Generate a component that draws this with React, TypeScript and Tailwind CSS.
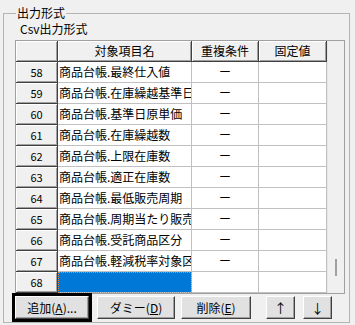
import React from 'react';

// 出力形式 panel: legacy WinForms look
const rows = [
  { no: 58, name: '商品台帳.最終仕入値', dup: true },
  { no: 59, name: '商品台帳.在庫繰越基準日', dup: true },
  { no: 60, name: '商品台帳.基準日原単価', dup: true },
  { no: 61, name: '商品台帳.在庫繰越数', dup: true },
  { no: 62, name: '商品台帳.上限在庫数', dup: true },
  { no: 63, name: '商品台帳.適正在庫数', dup: true },
  { no: 64, name: '商品台帳.最低販売周期', dup: true },
  { no: 65, name: '商品台帳.周期当たり販売数', dup: true },
  { no: 66, name: '商品台帳.受託商品区分', dup: true },
  { no: 67, name: '商品台帳.軽減税率対象区分', dup: true },
  { no: 68, name: '', dup: false, selected: true },
];

const raised =
  'bg-[#f0f0f0] border-r border-b border-[#404040] shadow-[inset_1px_1px_#ffffff,inset_-1px_-1px_#a0a0a0]';

const btnBase =
  'h-[23px] flex items-center justify-center bg-[#e1e1e1] border border-t-white border-l-white border-r-[#404040] border-b-[#404040] shadow-[inset_-1px_-1px_#a0a0a0] leading-none text-black';

const WinButton: React.FC<{ label: string; mnemonic: string; suffix?: string; className?: string }> = ({
  label,
  mnemonic,
  suffix = '',
  className = '',
}) => (
  <button className={`${btnBase} text-[12px] ${className}`}>
    {label}(<span className="underline">{mnemonic}</span>){suffix}
  </button>
);

export default function App() {
  return (
    <div
      className="w-[355px] h-[325px] bg-[#f0f0f0] text-black overflow-hidden pt-[6px] pl-[3px]"
      style={{ fontFamily: '"Noto Sans CJK JP", "Liberation Sans", sans-serif' }}
    >
      <fieldset className="w-[347px] h-[317px] border border-[#b4b4b4] pl-[11px] pr-[3px]">
        <legend className="ml-[1px] px-[1px] text-[12px] leading-[14px]">出力形式</legend>
        <div className="ml-[5px] mt-[2px] text-[12px] leading-[14px]">Csv出力形式</div>

        {/* grid */}
        <div className="mt-[4px] w-[330px] h-[254px] border border-[#a0a0a0] bg-[#f0f0f0] flex">
          <div className="w-[311px] flex flex-col">
            <div className="flex h-[21px] text-[12px]">
              <div className={`w-[42px] ${raised}`} />
              <div className={`w-[134px] ${raised} flex items-center justify-center`}>対象項目名</div>
              <div className={`w-[67px] ${raised} flex items-center justify-center`}>重複条件</div>
              <div className={`w-[68px] ${raised} flex items-center justify-center`}>固定値</div>
            </div>
            {rows.map((r) => (
              <div key={r.no} className="flex h-[21px] text-[12px]">
                <div className={`w-[42px] ${raised} flex items-center justify-center text-[11px]`}>{r.no}</div>
                <div
                  className={`w-[134px] border-b border-r border-[#c0c0c0] overflow-hidden whitespace-nowrap leading-[20px] pl-[1px] ${
                    r.selected ? 'bg-[#0078d7] outline-1 outline-dotted outline-[#f08a24] -outline-offset-1' : 'bg-white'
                  }`}
                >
                  {r.name}
                </div>
                <div className="w-[67px] bg-white border-b border-r border-[#c0c0c0] flex items-center justify-center">
                  {r.dup ? 'ー' : ''}
                </div>
                <div className="w-[68px] bg-white border-b border-r border-[#c0c0c0]" />
              </div>
            ))}
          </div>
          {/* scrollbar */}
          <div className="flex-1 border-l border-[#e6e6e6] flex flex-col items-center pt-[218px]">
            <div className="w-[2px] h-[17px] bg-[#a0a0a0]" />
          </div>
        </div>

        {/* buttons */}
        <div className="flex items-center mt-[-1px] -ml-[3px]">
          <div className="border-[3px] border-black">
            <WinButton label="追加" mnemonic="A" suffix="..." className="w-[74px]" />
          </div>
          <WinButton label="ダミー" mnemonic="D" className="w-[78px] ml-[5px]" />
          <WinButton label="削除" mnemonic="E" className="w-[70px] ml-[6px]" />
          <button className={`${btnBase} w-[29px] ml-[15px] text-[13px]`}>↑</button>
          <button className={`${btnBase} w-[29px] ml-[8px] text-[13px]`}>↓</button>
        </div>
      </fieldset>
    </div>
  );
}
